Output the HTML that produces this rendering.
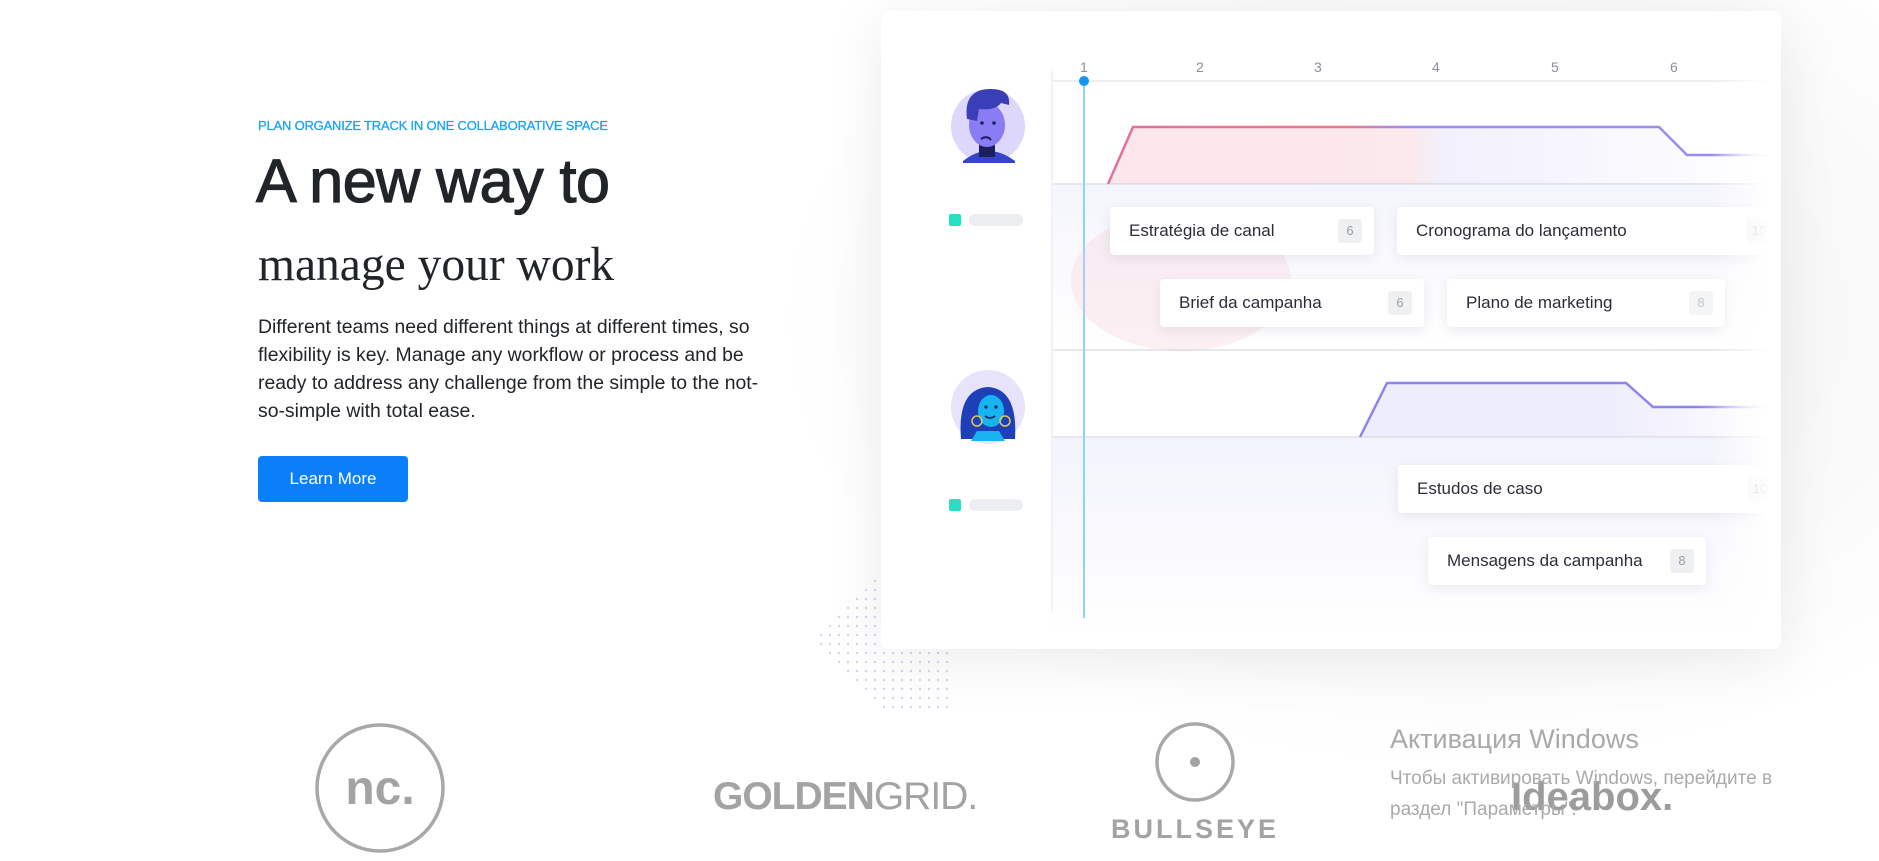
<!DOCTYPE html>
<html><head><meta charset="utf-8"><style>
*{margin:0;padding:0;box-sizing:border-box}
body{width:1879px;height:861px;overflow:hidden;background:#fff;font-family:"Liberation Sans",sans-serif;position:relative}
.abs{position:absolute}
.sub{left:258px;top:118px;font-size:13px;color:#1aa3f5;letter-spacing:-.2px;-webkit-text-stroke:.3px #1aa3f5}
.h1{left:256px;top:146px;font-size:61px;color:#212529;letter-spacing:-0.5px;-webkit-text-stroke:1.2px #212529}
.h2{left:258px;top:238px;font-family:"Liberation Serif",serif;font-size:47.5px;color:#212529}
.p{left:258px;top:313px;width:505px;font-size:19.4px;line-height:28px;color:#212529}
.btn{left:258px;top:456px;width:150px;height:46px;background:#0a7ff9;border-radius:4px;color:#fff;font-size:17px;text-align:center;line-height:46px}
.shadow{left:760px;top:-60px;width:1160px;height:840px;border-radius:200px;background:radial-gradient(ellipse at 60% 45%,rgba(0,0,0,.06),rgba(0,0,0,0) 70%)}
.card{left:881px;top:11px;width:900px;height:638px;background:#fff;border-radius:8px;box-shadow:0 10px 60px rgba(0,0,0,.08);overflow:hidden}
.num{font-size:14px;color:#8a909a;top:48px}
.tk{position:absolute;height:48px;background:#fff;border-radius:4px;box-shadow:0 3px 12px rgba(40,40,80,.09);font-size:17px;color:#2b2e38;line-height:48px;padding-left:19px}
.bd{position:absolute;right:12px;top:12px;width:24px;height:24px;background:#eef0f2;border-radius:3px;color:#9aa0a8;font-size:13px;text-align:center;line-height:24px}
.logo{color:#a3a3a3}
.fade{position:absolute;right:0;top:0;width:70px;height:638px;background:linear-gradient(90deg,rgba(255,255,255,0),#fff 85%)}
</style></head><body>
<div class="abs shadow"></div>
<svg class="abs" style="left:810px;top:570px" width="140" height="150">
<defs><pattern id="d" width="9" height="9" patternUnits="userSpaceOnUse"><circle cx="2" cy="2" r="1.2" fill="#d6d3f0"/></pattern></defs>
<polygon points="70,0 140,0 140,140 70,140 0,70" fill="url(#d)"/>
</svg>
<div class="abs sub">PLAN ORGANIZE TRACK IN ONE COLLABORATIVE SPACE</div>
<div class="abs h1">A new way to</div>
<div class="abs h2">manage your work</div>
<div class="abs p">Different teams need different things at different times, so flexibility is key. Manage any workflow or process and be ready to address any challenge from the simple to the not-so-simple with total ease.</div>
<div class="abs btn">Learn More</div>

<div class="abs card">
<svg class="abs" style="left:0;top:0" width="900" height="638">
<defs>
<linearGradient id="g1" x1="0" x2="1"><stop offset="0" stop-color="#f3a0b0" stop-opacity=".25"/><stop offset=".45" stop-color="#f0a6b4" stop-opacity=".25"/><stop offset=".5" stop-color="#c8c4f6" stop-opacity=".25"/><stop offset="1" stop-color="#c8c4f6" stop-opacity="0"/></linearGradient>
<linearGradient id="g2" x1="0" x2="1"><stop offset=".6" stop-color="#c8c4f6" stop-opacity=".3"/><stop offset="1" stop-color="#c8c4f6" stop-opacity="0"/></linearGradient>
<linearGradient id="l1" x1="0" x2="1"><stop offset="0" stop-color="#e46fa0"/><stop offset=".35" stop-color="#f0768a"/><stop offset=".45" stop-color="#9b8cf5"/><stop offset=".9" stop-color="#9b8cf5"/><stop offset="1" stop-color="#9b8cf5" stop-opacity="0"/></linearGradient>
<linearGradient id="l2" x1="0" x2="1"><stop offset=".8" stop-color="#8f82f3"/><stop offset="1" stop-color="#8f82f3" stop-opacity="0"/></linearGradient>
<linearGradient id="bg" x1="0" y1="0" x2="0" y2="1"><stop offset="0" stop-color="#eeeefc"/><stop offset="1" stop-color="#fff"/></linearGradient>
</defs>
<rect x="171" y="173" width="729" height="166" fill="url(#bg)" opacity=".6"/>
<rect x="171" y="426" width="729" height="200" fill="url(#bg)" opacity=".7"/>
<line x1="171" y1="70" x2="900" y2="70" stroke="#eceef1" stroke-width="2"/>
<line x1="171" y1="173" x2="900" y2="173" stroke="#e6e8ec" stroke-width="2"/>
<line x1="171" y1="339" x2="900" y2="339" stroke="#e6e8ec" stroke-width="2"/>
<line x1="171" y1="426" x2="900" y2="426" stroke="#e6e8ec" stroke-width="2"/>
<line x1="171" y1="60" x2="171" y2="600" stroke="#f1f2f4" stroke-width="2"/>
<polygon points="227,173 252,116 778,116 806,144 900,144 900,173" fill="url(#g1)"/>
<polyline points="227,173 252,116 778,116 806,144 900,144" fill="none" stroke="url(#l1)" stroke-width="2.5"/>
<polygon points="479,426 506,372 745,372 772,396 900,396 900,426" fill="url(#g2)"/>
<polyline points="479,426 506,372 745,372 772,396 900,396" fill="none" stroke="url(#l2)" stroke-width="2.5"/>
<line x1="203" y1="70" x2="203" y2="607" stroke="#8fd3f9" stroke-width="2"/>
<circle cx="203" cy="70" r="5" fill="#1497f0"/>
<circle cx="107" cy="115" r="37" fill="#ddd8fb"/>
<path d="M82,150 q25,-20 52,0 l0,2 l-52,0z" fill="#3744c8"/>
<rect x="98" y="128" width="16" height="18" fill="#1d2060"/>
<ellipse cx="106" cy="114" rx="18" ry="22" fill="#8a7cf2"/>
<path d="M86,108 q-4,-30 24,-30 q20,0 18,16 l-8,-2 q-6,8 -22,6 l-2,12z" fill="#3a3fb8"/>
<path d="M100,128 q6,-4 10,1" stroke="#1d2060" stroke-width="2" fill="none"/>
<circle cx="101" cy="112" r="1.8" fill="#1d2060"/><circle cx="113" cy="112" r="1.8" fill="#1d2060"/>
<circle cx="107" cy="396" r="37" fill="#e6e3fb"/>
<path d="M80,428 q-4,-50 27,-52 q30,2 27,52z" fill="#1d3fb8"/>
<path d="M90,430 l34,0 l-6,-10 l-22,0z" fill="#1ab2f0"/>
<ellipse cx="110" cy="400" rx="13" ry="16" fill="#16b5f2"/>
<circle cx="96" cy="410" r="5" fill="none" stroke="#e8c54a" stroke-width="1.5"/>
<circle cx="124" cy="410" r="5" fill="none" stroke="#e8c54a" stroke-width="1.5"/>
<path d="M104,405 q5,4 10,0" stroke="#0d2060" stroke-width="1.5" fill="none"/>
<circle cx="105" cy="396" r="1.6" fill="#0d2060"/><circle cx="115" cy="396" r="1.6" fill="#0d2060"/>
<rect x="68" y="203" width="12" height="12" rx="2" fill="#26e0c5"/>
<rect x="88" y="203" width="54" height="12" rx="6" fill="#eceef1"/>
<rect x="68" y="488" width="12" height="12" rx="2" fill="#26e0c5"/>
<rect x="88" y="488" width="54" height="12" rx="6" fill="#eceef1"/>
<ellipse cx="300" cy="270" rx="110" ry="70" fill="#f6c5cf" opacity=".25"/>
</svg>
<div class="abs num" style="left:199px">1</div>
<div class="abs num" style="left:315px">2</div>
<div class="abs num" style="left:433px">3</div>
<div class="abs num" style="left:551px">4</div>
<div class="abs num" style="left:670px">5</div>
<div class="abs num" style="left:789px">6</div>
<div class="tk" style="left:229px;top:196px;width:264px">Estratégia de canal<span class="bd">6</span></div>
<div class="tk" style="left:516px;top:196px;width:378px">Cronograma do lançamento<span class="bd" style="right:4px">10</span></div>
<div class="tk" style="left:279px;top:268px;width:264px">Brief da campanha<span class="bd">6</span></div>
<div class="tk" style="left:566px;top:268px;width:278px">Plano de marketing<span class="bd" style="opacity:.6">8</span></div>
<div class="tk" style="left:517px;top:454px;width:378px">Estudos de caso<span class="bd" style="right:4px">10</span></div>
<div class="tk" style="left:547px;top:526px;width:278px">Mensagens da campanha<span class="bd">8</span></div>
<div class="fade"></div>
</div>

<svg class="abs" style="left:310px;top:718px" width="140" height="140"><circle cx="70" cy="70" r="63" fill="none" stroke="#a8a8a8" stroke-width="3.5"/><text x="70" y="86" text-anchor="middle" font-family="Liberation Sans" font-weight="bold" font-size="48" fill="#a3a3a3">nc.</text></svg>
<div class="abs logo" style="left:713px;top:775px;font-size:39px;letter-spacing:-1px"><b>GOLDEN</b>GRID.</div>
<svg class="abs" style="left:1150px;top:720px" width="90" height="90"><circle cx="45" cy="42" r="38" fill="none" stroke="#a8a8a8" stroke-width="3.5"/><circle cx="45" cy="42" r="5" fill="#a3a3a3"/></svg>
<div class="abs logo" style="left:1111px;top:814px;font-size:27px;font-weight:bold;letter-spacing:3px">BULLSEYE</div>
<div class="abs logo" style="left:1511px;top:775px;font-size:40px;font-weight:bold;color:#9c9c9c">Ideabox.</div>
<div class="abs" style="left:1390px;top:724px;font-size:27px;color:#a9a9a9">Активация Windows</div>
<div class="abs" style="left:1390px;top:763px;font-size:19px;line-height:31px;color:#aaaaaa">Чтобы активировать Windows, перейдите в<br>раздел "Параметры".</div>
</body></html>
